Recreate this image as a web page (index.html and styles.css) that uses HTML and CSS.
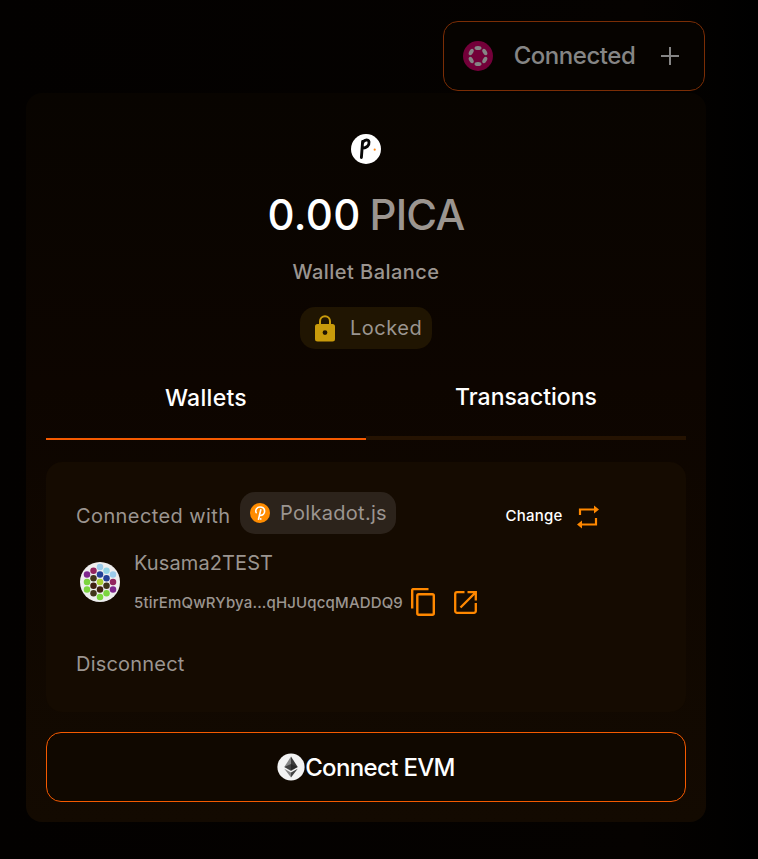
FILE: index.html
```html
<!DOCTYPE html>
<html lang="en">
<head>
<meta charset="utf-8">
<title>Wallet</title>
<link rel="stylesheet" href="styles.css">
</head>
<body>
<header class="topbar">
  <button class="status">
    <svg class="status-logo" viewBox="0 0 30 30"><circle cx="15" cy="15" r="15" fill="#730039"/><g fill="#858585"><ellipse cx="15" cy="7" rx="3.5" ry="2"/><ellipse cx="15" cy="23" rx="3.5" ry="2"/><ellipse cx="8.2" cy="11" rx="3.5" ry="2" transform="rotate(-60 8.2 11)"/><ellipse cx="21.8" cy="11" rx="3.5" ry="2" transform="rotate(60 21.8 11)"/><ellipse cx="8.2" cy="19" rx="3.5" ry="2" transform="rotate(60 8.2 19)"/><ellipse cx="21.8" cy="19" rx="3.5" ry="2" transform="rotate(-60 21.8 19)"/></g></svg>
    <span class="status-label">Connected</span>
    <svg class="plus" viewBox="0 0 18 18"><path d="M9 0v18M0 9h18" stroke="#858585" stroke-width="2"/></svg>
  </button>
</header>
<main class="panel">
  <svg class="token" viewBox="0 0 30 30"><circle cx="15" cy="15" r="15" fill="#fff"/><path d="M10.400 23.500 11.600 7.500M11.400 9.500C12.500 5.500 17.500 4.800 18 8c.4 3.600-2.500 6-6.500 6.400" fill="none" stroke="#080808" stroke-width="2.900" stroke-linecap="round" stroke-linejoin="round"/><circle cx="23.700" cy="15.700" r="1.100" fill="#ff8a19"/></svg>
  <h1 class="balance"><span class="amount">0.00</span><span class="unit">PICA</span></h1>
  <p class="caption">Wallet Balance</p>
  <div class="locked">
    <svg class="lock" viewBox="0 0 20 27"><path d="M5 10V6.200a5 5 0 0 1 10 0V10" fill="none" stroke="#c99b0b" stroke-width="2"/><path fill-rule="evenodd" d="M2.500 9h15A2.500 2.500 0 0 1 20 11.500V24a2.500 2.500 0 0 1-2.500 2.500h-15A2.500 2.500 0 0 1 0 24V11.500A2.500 2.500 0 0 1 2.500 9ZM10 15.200a2.400 2.400 0 1 0 0 4.800 2.400 2.400 0 0 0 0-4.800Z" fill="#c99b0b"/></svg>
    <span class="locked-label">Locked</span>
  </div>
  <nav class="tabs">
    <a class="tab active"><span class="tab-wallets">Wallets</span></a>
    <a class="tab"><span class="tab-transactions">Transactions</span></a>
  </nav>
  <section class="card">
    <div class="connection">
      <span class="with">Connected with</span>
      <span class="provider">
        <svg class="pjs" viewBox="0 0 20 20"><circle cx="10" cy="10" r="10" fill="#ff8c00"/><path d="M6.200 9.700C4.900 7 6.800 4 10 4c2.700 0 4.600 1.700 4.600 4.200 0 2.700-2 4.500-4.800 4.200M10.800 6.800 8.500 16.200" fill="none" stroke="#fff" stroke-width="1.600" stroke-linecap="round"/><circle cx="10.700" cy="15.900" r=".9" fill="#fff"/></svg>
        <span class="provider-label">Polkadot.js</span>
      </span>
      <span class="change"><span class="change-label">Change</span>
        <svg class="swap" viewBox="0 0 22 24"><path d="M3 10V4.500h15M19 13v6.500H4" fill="none" stroke="#ff8800" stroke-width="2.200"/><path d="M17 .5 22 4.500l-5 4ZM5 15.500l-5 4 5 4Z" fill="#ff8800"/></svg>
      </span>
    </div>
    <div class="account">
      <svg class="avatar" viewBox="0 0 40 40"><circle cx="20" cy="20" r="20" fill="#eee"/>
        <circle cx="20" cy="5" r="3.250" fill="#9bcbea"/><circle cx="13.500" cy="8.700" r="3.250" fill="#92245f"/><circle cx="26.500" cy="8.700" r="3.250" fill="#94d4e6"/><circle cx="7" cy="12.500" r="3.250" fill="#7f278e"/><circle cx="20" cy="12.500" r="3.250" fill="#233f96"/><circle cx="33" cy="12.500" r="3.250" fill="#9bcbea"/><circle cx="13.500" cy="16.200" r="3.250" fill="#40351a"/><circle cx="26.500" cy="16.200" r="3.250" fill="#233f96"/><circle cx="7" cy="20" r="3.250" fill="#7bd53e"/><circle cx="20" cy="20" r="3.250" fill="#aad132"/><circle cx="33" cy="20" r="3.250" fill="#92245f"/><circle cx="13.500" cy="23.700" r="3.250" fill="#40210f"/><circle cx="26.500" cy="23.700" r="3.250" fill="#40351a"/><circle cx="7" cy="27.500" r="3.250" fill="#7bd53e"/><circle cx="20" cy="27.500" r="3.250" fill="#40210f"/><circle cx="33" cy="27.500" r="3.250" fill="#7f278e"/><circle cx="13.500" cy="31.200" r="3.250" fill="#40351a"/><circle cx="26.500" cy="31.200" r="3.250" fill="#7bd53e"/><circle cx="20" cy="35" r="3.250" fill="#7bd53e"/></svg>
      <div class="identity">
        <span class="name">Kusama2TEST</span>
        <div class="address-row"><span class="address">5tirEmQwRYbya...qHJUqcqMADDQ9</span>
          <svg class="copy" viewBox="0 0 24 28"><g fill="none" stroke="#ff8800" stroke-width="2.400"><path d="M1.200 20.500V2.300a1.200 1.200 0 0 1 1.200-1.200H17.500"/><rect x="6.300" y="6.200" width="16.500" height="20.500" rx="1.500"/></g></svg>
          <svg class="open" viewBox="0 0 23 23"><path d="M10.500 1.200H3A1.800 1.800 0 0 0 1.200 3v17A1.800 1.800 0 0 0 3 21.800h17a1.800 1.800 0 0 0 1.800-1.800v-8M13.500 1.200h8.300V9.500M21.500 1.500 6.500 16.500" fill="none" stroke="#ff8800" stroke-width="2.300"/></svg>
        </div>
      </div>
    </div>
    <span class="disconnect">Disconnect</span>
  </section>
  <button class="evm">
    <svg class="eth" viewBox="0 0 28 28"><circle cx="14" cy="14" r="13.600" fill="#f3f3f3"/><path d="M14 3.500v13.700L7.300 14Z" fill="#858585"/><path d="M14 3.500 20.700 14 14 17.200Z" fill="#3b3b3b"/><path d="m7.300 14 6.700-3.100 6.700 3.100-6.700 4Z" fill="#222" opacity=".7"/><path d="m7.300 15.700 6.700 3.900v5Z" fill="#858585"/><path d="M14 19.600 20.700 15.700 14 24.600Z" fill="#424242"/></svg>
    <span class="evm-label">Connect EVM</span>
  </button>
</main>
</body>
</html>
```
FILE: styles.css
```css
* { box-sizing: border-box; }
body {
  margin: 0;
  height: 859px;
  padding: 21px 52px 0 26px;
  background: linear-gradient(90deg, #030100 0, #050200 640px, #020100 720px, #000 100%);
  color: #9b9590;
  font-family: Inter, "Liberation Sans", sans-serif;
  overflow: hidden;
}
svg { display: block; flex: none; }
button { font: inherit; color: inherit; padding: 0; }
span { white-space: nowrap; }
.topbar { display: flex; justify-content: flex-end; padding-right: 1px; }
.status {
  display: flex; align-items: center;
  width: 262px; height: 70px; padding-left: 19px;
  border: 1px solid #7a2d05; border-radius: 15px;
  background: #060300; color: #858585;
}
.status-logo { width: 30px; height: 30px; }
.status-label { width: 123px; margin: -2px 25px 0 20px; font-size: 24px; font-weight: 500; letter-spacing: -.45px; }
.plus { width: 18px; height: 18px; }
.panel {
  display: flex; flex-direction: column; align-items: center;
  width: 680px; height: 729px; margin-top: 2px; padding: 41px 20px 20px;
  border-radius: 16px;
  background: linear-gradient(#080400, #0d0500 40%, #130a01);
}
.token { width: 30px; height: 30px; }
.balance { display: flex; gap: 9px; margin: 25px 0 0; font-size: 42px; line-height: 52px; font-weight: 400; }
.amount { color: #fff; font-weight: 500; letter-spacing: .3px; }
.unit { font-weight: 450; letter-spacing: -.8px; }
.caption { margin: 19px 0 0; font-size: 20px; line-height: 24px; font-weight: 500; letter-spacing: .45px; }
.locked {
  display: flex; align-items: center;
  width: 132px; height: 42px; margin-top: 23px; padding-left: 15px;
  border-radius: 15px; background: #201502;
}
.lock { width: 20px; height: 27px; }
.locked-label { margin-left: 15px; font-size: 20px; letter-spacing: .5px; }
.tabs { display: flex; width: 640px; height: 91px; }
.tab {
  display: flex; justify-content: center; width: 320px; padding-top: 34px;
  border-bottom: 4px solid #251302; color: #fff; font-size: 23px; line-height: 28px; font-weight: 500;
}
.tab.active { padding-top: 35px; border-bottom: 2px solid #f55a00; }
.tab-wallets { letter-spacing: .3px; }
.card {
  display: flex; flex-direction: column;
  width: 640px; height: 250px; margin-top: 22px; padding: 30px;
  border-radius: 16px; background: #150b01;
}
.connection { display: flex; height: 42px; }
.with { width: 164px; padding-top: 12px; font-size: 20px; line-height: 24px; letter-spacing: .4px; }
.provider {
  display: flex; align-items: center;
  width: 156px; height: 42px; padding-left: 10px;
  border-radius: 15px; background: #2c231b;
}
.pjs { width: 20px; height: 20px; }
.provider-label { margin-left: 10px; font-size: 20px; letter-spacing: .3px; }
.change { display: flex; align-items: center; height: 50px; margin-left: 109.5px; color: #fff; font-size: 15px; font-weight: 500; }
.change-label { width: 71.5px; margin-top: -3px; letter-spacing: .25px; }
.swap { width: 22px; height: 24px; }
.account { display: flex; padding: 16px 0 0 4px; }
.avatar { width: 40px; height: 40px; margin-top: 12px; }
.identity { margin-left: 14px; }
.name { display: block; font-size: 20px; line-height: 26px; letter-spacing: .1px; }
.address-row { display: flex; align-items: center; height: 28px; margin-top: 12px; }
.address { width: 277px; font-size: 15px; font-weight: 500; letter-spacing: .16px; }
.copy { width: 24px; height: 28px; }
.open { width: 23px; height: 23px; margin-left: 19px; }
.disconnect { margin-top: 36px; font-size: 20px; line-height: 24px; letter-spacing: .2px; }
.evm {
  display: flex; align-items: center; justify-content: center;
  width: 640px; height: 70px; margin-top: 20px;
  border: 1px solid #f55a00; border-radius: 15px;
  background: #100800; color: #fff; font-size: 24px; font-weight: 500; letter-spacing: -.65px;
}
.eth { width: 28px; height: 28px; }
```
